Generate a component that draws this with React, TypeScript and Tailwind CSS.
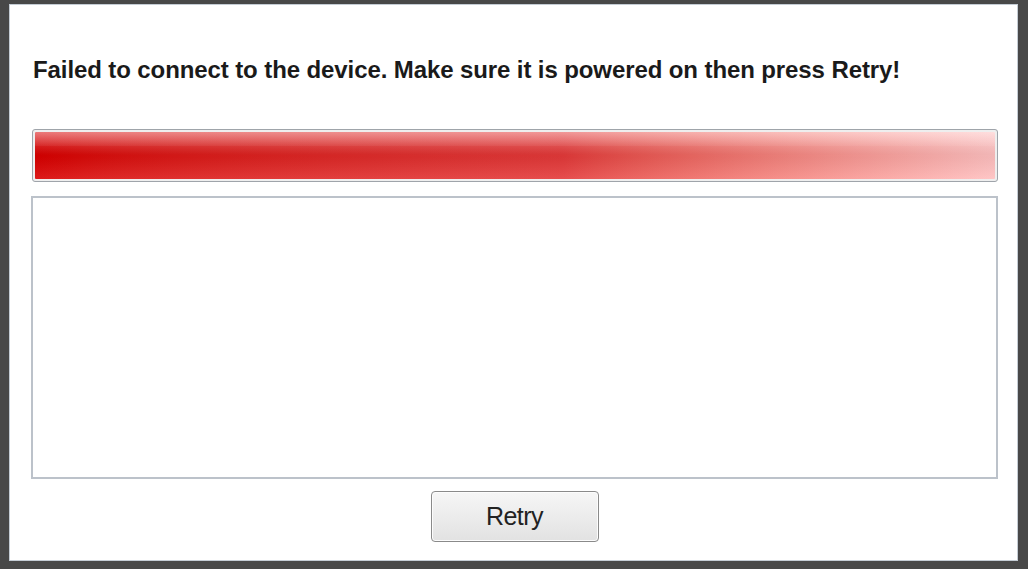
export default function App() {
  return (
    <div className="w-[1028px] h-[569px] bg-[#484848] pt-[4px] pl-[9px] overflow-hidden font-['Liberation_Sans',Arial,sans-serif]">
      <div className="w-[1009px] h-[557px] bg-white border border-[#c4ccd4] flex flex-col pl-[21px] pr-[19px]">
        {/* Message */}
        <p className="mt-[50px] h-[30px] pl-[2px] text-[24px] leading-[30px] font-bold tracking-[-0.1px] text-[#1a1a1a] whitespace-nowrap">
          Failed to connect to the device. Make sure it is powered on then press Retry!
        </p>

        {/* Progress bar */}
        <div className="mt-[44px] ml-[1px] h-[53px] rounded-[3px] border border-[#9fa4aa] bg-[#eeeeee] p-[2px]">
          <div className="relative h-full rounded-[1px] bg-gradient-to-r from-[#d90000] via-[#e43a3a] via-55% to-[#ffc0c0]">
            <div className="absolute inset-0 bg-gradient-to-b from-white/30 via-black/5 to-white/10" />
            <div className="absolute inset-x-0 top-0 h-[14px] bg-gradient-to-b from-white/25 to-white/5" />
          </div>
        </div>

        {/* Log box */}
        <div className="mt-[14px] h-[283px] border-2 border-[#bcc2ca] bg-white" />

        {/* Retry button */}
        <div className="flex justify-center mt-[12px]">
          <button className="w-[168px] h-[51px] rounded-[4px] border border-[#8a8a8a] bg-gradient-to-b from-[#f6f6f6] to-[#e2e2e2] shadow-[inset_0_0_0_1px_#fcfcfc] text-[25px] tracking-[-0.5px] text-[#222222]">
            Retry
          </button>
        </div>
      </div>
    </div>
  )
}
